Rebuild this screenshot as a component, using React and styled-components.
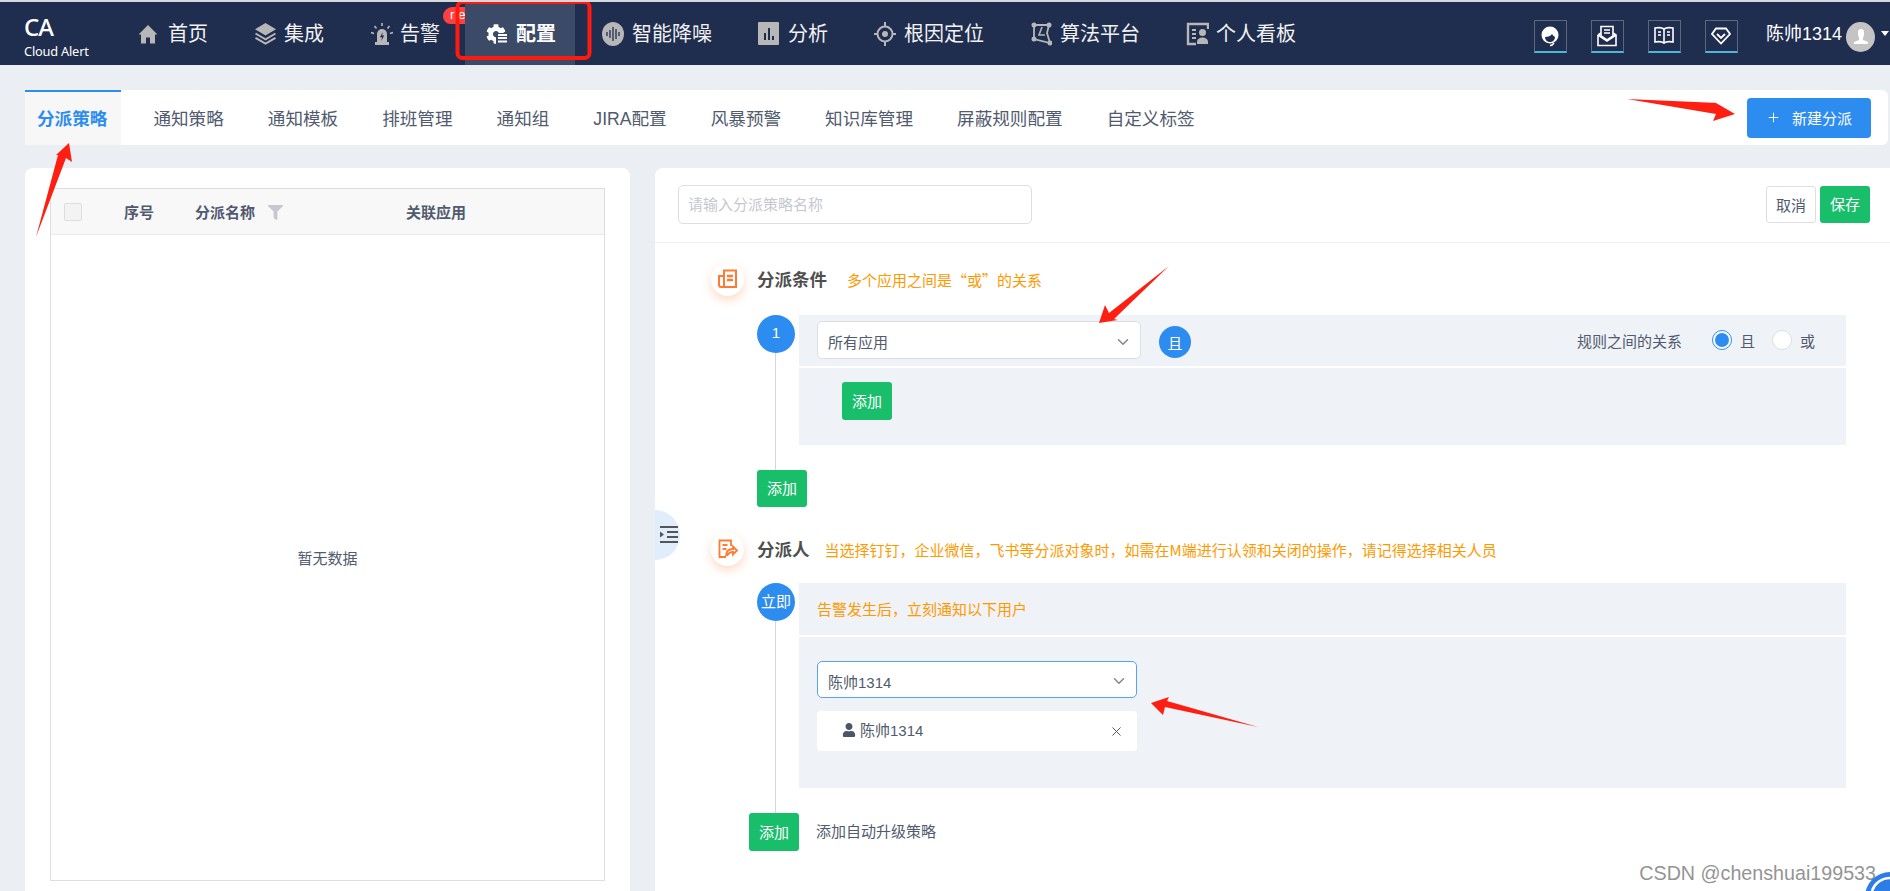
import React from "react";
import styled, { createGlobalStyle } from "styled-components";
import { ChevronDown, Plus, X } from "lucide-react";
import { FaFilter, FaUser, FaCog } from "react-icons/fa";

const GlobalStyle = createGlobalStyle`
  html, body {
    margin: 0;
    padding: 0;
    height: 891px;
    overflow: hidden;
    background: #ebeef3;
    font-family: "Liberation Sans", "Noto Sans CJK SC", sans-serif;
    color: #515a6e;
  }
  * {
    box-sizing: border-box;
  }
`;

const Page = styled.div`
  position: relative;
  width: 1890px;
  height: 891px;
  overflow: hidden;
  border-top: 2px solid #d6d8dc;
`;

/* 顶部导航 */
const Header = styled.header`
  display: flex;
  align-items: stretch;
  height: 63px;
  background: #1f2d4f;
  color: #f2f2f2;
`;

const Logo = styled.div`
  width: 117px;
  padding: 11px 0 0 24px;
  color: #fff;
  font-family: "Noto Sans", sans-serif;
`;

const LogoTitle = styled.div`
  font-size: 24px;
  line-height: 28px;
  font-weight: 500;
  letter-spacing: -1px;
`;

const LogoSub = styled.div`
  margin-top: 2px;
  font-size: 12.8px;
  line-height: 16px;
  letter-spacing: -0.2px;
`;

const Nav = styled.nav`
  display: flex;
`;

const NavItem = styled.a`
  position: relative;
  display: flex;
  align-items: center;
  height: 63px;
  padding: 0 19px 0 21px;
  margin-right: 6px;
  font-size: 20px;
  line-height: 28px;
  white-space: nowrap;
  z-index: ${props => (props.$active ? 1 : 0)};
  background: ${props => (props.$active ? "#3b4a66" : "transparent")};
  color: ${props => (props.$active ? "#fff" : "#f2f2f2")};
  font-weight: ${props => (props.$active ? 700 : 400)};
`;

const NavIcon = styled.span`
  display: flex;
  width: 21px;
  margin-right: 9px;
  justify-content: flex-start;
  svg {
    display: block;
    flex: none;
  }
`;

const Badge = styled.span`
  position: absolute;
  left: 94px;
  top: 5px;
  width: 36px;
  height: 17px;
  padding-left: 7px;
  border-radius: 10px 0 0 8px;
  background: #ff4040;
  color: #fff;
  font-size: 13px;
  line-height: 16px;
  letter-spacing: 4px;
  font-weight: 400;
`;

const HeaderRight = styled.div`
  display: flex;
  align-items: center;
  margin-left: auto;
  padding-right: 1px;
`;

const ToolBox = styled.div`
  display: flex;
  align-items: center;
  justify-content: center;
  width: 33px;
  height: 33px;
  margin: 6px 24px 0 0;
  border: 1px solid #5c667c;
  border-bottom: 2px solid #4fb6d8;
`;

const UserName = styled.span`
  margin: 0 4px;
  font-size: 18px;
  line-height: 24px;
  color: #fff;
`;

const Avatar = styled.div`
  display: flex;
  align-items: center;
  justify-content: center;
  width: 29px;
  height: 30px;
  margin-top: 6px;
  border-radius: 50%;
  background: #c4c4c4;
`;

const Caret = styled.span`
  width: 0;
  height: 0;
  margin: 0 0 0 6px;
  border-left: 4.5px solid transparent;
  border-right: 4.5px solid transparent;
  border-top: 5px solid #fff;
`;

/* 主体 */
const Main = styled.main`
  padding: 25px 0 0 25px;
`;

const TabBar = styled.div`
  display: flex;
  align-items: stretch;
  height: 55px;
  margin: 0 2px 23px 0;
  padding-right: 17px;
  background: #fff;
  border-radius: 0 6px 6px 0;
`;

const Tab = styled.a`
  display: flex;
  align-items: center;
  padding: ${props => (props.$active ? "0 14px 0 12px" : "0 22px")};
  margin-right: ${props => (props.$active ? "10px" : "0")};
  font-size: 17.6px;
  line-height: 24px;
  white-space: nowrap;
  font-weight: ${props => (props.$active ? 700 : 400)};
  color: ${props => (props.$active ? "#2d8cf0" : "#515a6e")};
  background: ${props => (props.$active ? "#f7f7f7" : "transparent")};
  border-top: 2px solid ${props => (props.$active ? "#2d8cf0" : "transparent")};
`;

const PrimaryButton = styled.button`
  display: flex;
  align-items: center;
  align-self: center;
  width: 124px;
  height: 40px;
  margin-left: auto;
  padding: 0 0 0 19px;
  border: 0;
  border-radius: 4px;
  background: #2d8cf0;
  color: #fff;
  font: inherit;
  font-size: 15px;
  svg {
    margin-right: 11px;
  }
`;

const Columns = styled.div`
  display: flex;
  gap: 25px;
  height: 723px;
`;

const LeftPanel = styled.section`
  width: 605px;
  padding: 20px 25px 10px;
  background: #fff;
  border-radius: 8px 8px 0 0;
`;

const Table = styled.div`
  display: flex;
  flex-direction: column;
  height: 100%;
  border: 1px solid #dcdee2;
`;

const TableHead = styled.div`
  display: grid;
  grid-template-columns: 60px 71px 211px 1fr;
  align-items: center;
  height: 46px;
  padding-left: 13px;
  background: #f8f8f9;
  border-bottom: 1px solid #e8eaec;
  font-size: 15px;
  font-weight: 700;
`;

const HeadCheck = styled.span`
  width: 18px;
  height: 18px;
  border: 1px solid #dcdee2;
  border-radius: 2px;
  background: #f3f3f3;
`;

const HeadCell = styled.span`
  display: flex;
  align-items: center;
  gap: 13px;
  svg {
    margin-top: 2px;
  }
`;

const TableEmpty = styled.div`
  flex: 1;
  display: flex;
  align-items: center;
  justify-content: center;
  font-size: 15px;
`;

const RightPanel = styled.section`
  position: relative;
  flex: 1;
  background: #fff;
  border-radius: 8px 0 0 0;
`;

const Toolbar = styled.div`
  display: flex;
  align-items: center;
  height: 75px;
  padding: 0 20px 1px 23px;
  border-bottom: 1px solid #eeeff2;
`;

const NameInput = styled.input`
  width: 354px;
  height: 39px;
  padding: 0 9px;
  border: 1px solid #dcdee2;
  border-radius: 5px;
  font: inherit;
  font-size: 15px;
  &::placeholder {
    color: #c5c8ce;
  }
`;

const Actions = styled.div`
  display: flex;
  gap: 4px;
  margin-left: auto;
`;

const GhostButton = styled.button`
  width: 50px;
  height: 37px;
  padding: 0;
  border: 1px solid #dcdee2;
  border-radius: 3px;
  background: #fff;
  color: #515a6e;
  font: inherit;
  font-size: 15px;
`;

const GreenButton = styled.button`
  flex: none;
  width: 50px;
  height: ${props => props.$h || 37}px;
  margin-left: ${props => props.$left || 0}px;
  padding: 0 0 2px;
  border: 0;
  border-radius: 3px;
  background: #19be6b;
  color: #fff;
  font: inherit;
  font-size: 15px;
`;

const Form = styled.div`
  padding: 20px 44px 0 56px;
`;

const CollapseTab = styled.div`
  position: absolute;
  left: 0;
  top: 342px;
  display: flex;
  align-items: center;
  width: 25px;
  height: 50px;
  padding-left: 5px;
  border-radius: 0 25px 25px 0;
  background: #e1edfb;
`;

const SectionHead = styled.div`
  display: flex;
  align-items: center;
  height: 32px;
  margin-top: ${props => props.$top || 0}px;
`;

const SectionIcon = styled.div`
  display: flex;
  align-items: center;
  justify-content: center;
  width: 33px;
  height: 33px;
  margin-right: 13px;
  border-radius: 50%;
  background: #fff;
  box-shadow: 0 4px 10px rgba(255, 130, 60, 0.3);
`;

const SectionTitle = styled.h3`
  margin: 1px ${props => props.$gap}px 0 0;
  font-size: 17.5px;
  line-height: 24px;
  font-weight: 700;
  color: #4f4f4f;
`;

const Hint = styled.span`
  font-family: "Noto Sans CJK SC", sans-serif;
  font-size: 15px;
  line-height: 22px;
  color: #ff9900;
  white-space: nowrap;
`;

const HeadHint = styled(Hint)`
  margin-top: 2px;
`;

const Step = styled.div`
  display: flex;
  margin: ${props => props.$top}px 0 0 46px;
`;

const Rail = styled.div`
  display: flex;
  flex-direction: column;
  align-items: center;
  width: 38px;
  margin-right: 4px;
`;

const RailDot = styled.div`
  flex: none;
  display: flex;
  align-items: center;
  justify-content: center;
  width: 38px;
  height: 38px;
  padding-bottom: 3px;
  border-radius: 50%;
  background: #2d8cf0;
  color: #fff;
  font-size: 15px;
`;

const RailLine = styled.div`
  flex: 1;
  width: 1px;
  margin-right: 1px;
  background: #d5d7da;
`;

const StepBody = styled.div`
  flex: 1;
  margin-bottom: 25px;
  background: #eff2f7;
`;

const StepRow = styled.div`
  display: flex;
  align-items: center;
  height: ${props => props.$h}px;
  padding: 0 31px 1px 18px;
  border-bottom: 2px solid #fff;
`;

const StepFill = styled.div`
  height: ${props => props.$h}px;
  padding: ${props => props.$pad};
`;

const Select = styled.div`
  display: flex;
  align-items: center;
  justify-content: space-between;
  width: ${props => props.$w}px;
  height: ${props => props.$h}px;
  padding: 3px 8px 0 10px;
  border: 1px solid ${props => (props.$focus ? "#57a3f3" : "#dcdee2")};
  border-radius: 5px;
  background: #fff;
  font-size: 15px;
`;

const AndDot = styled.div`
  display: flex;
  align-items: center;
  justify-content: center;
  width: 32px;
  height: 32px;
  margin: 4px 0 0 18px;
  border-radius: 50%;
  background: #2d8cf0;
  color: #fff;
  font-size: 15px;
`;

const Relation = styled.div`
  display: flex;
  align-items: center;
  margin-left: auto;
  font-size: 15px;
`;

const RelationLabel = styled.span`
  margin-right: 30px;
`;

const Radio = styled.span`
  display: flex;
  align-items: center;
  justify-content: center;
  width: 20px;
  height: 20px;
  margin-right: 8px;
  border: 1px solid ${props => (props.$on ? "#2d8cf0" : "#dcdee2")};
  border-radius: 50%;
  background: #fff;
  &::after {
    content: "";
    display: ${props => (props.$on ? "block" : "none")};
    width: 14px;
    height: 14px;
    border-radius: 50%;
    background: #2d8cf0;
  }
`;

const RadioText = styled.span`
  margin-right: ${props => props.$gap || 0}px;
`;

const UserChip = styled.div`
  display: flex;
  align-items: center;
  width: 320px;
  height: 40px;
  margin-top: 13px;
  padding: 0 13px 3px 25px;
  border-radius: 4px;
  background: #fff;
  font-size: 15px;
`;

const ChipName = styled.span`
  margin-left: 4px;
`;

const ChipClose = styled.span`
  display: flex;
  margin: 4px 0 0 auto;
`;

const AddRow = styled.div`
  display: flex;
  align-items: center;
  margin-left: 38px;
  font-size: 15px;
`;

const AddLabel = styled.span`
  margin: 0 0 4px 17px;
`;

const Watermark = styled.div`
  position: absolute;
  right: 14px;
  bottom: 6px;
  font-size: 19.7px;
  line-height: 24px;
  color: #949494;
`;

const Annotations = styled.svg`
  position: absolute;
  left: 0;
  top: -2px;
  z-index: 2;
  pointer-events: none;
`;

const Gray = "#b7b7b7";

const HomeIcon = () => (
  <svg width="20" height="20" viewBox="0 0 20 20">
    <path d="M10 1 0.5 10.5H3V19.500h5v-6h4v6h5V10.500h2.500z" fill={Gray} />
  </svg>
);

const LayersIcon = () => (
  <svg width="23" height="23" viewBox="0 0 23 23">
    <path d="M11.500 1 22 7.200 11.500 13.400 1 7.200z" fill={Gray} />
    <path d="M1.500 11.500 11.500 17.300 21.500 11.500M1.500 15.800 11.500 21.600 21.500 15.800" fill="none" stroke={Gray} strokeWidth="2" />
  </svg>
);

const AlarmIcon = () => (
  <svg width="24" height="24" viewBox="0 0 24 24">
    <path d="M7 21V12a5 5 0 0 1 10 0v9z" fill={Gray} />
    <rect x="5" y="20" width="14" height="3" fill={Gray} />
    <path d="M12.800 10 10 15.200h2l-.8 3.800 3-5.500h-2z" fill="#1f2d4f" />
    <path d="M12 1v3M4.500 4 6.500 6.500M19.500 4 17.500 6.500M1 10.500 4 11.500M23 10.500 20 11.500" stroke={Gray} strokeWidth="1.600" />
  </svg>
);

const ConfigIcon = () => (
  <svg width="22" height="20" viewBox="0 0 22 20">
    <FaCog size="20" color="#fff" />
    <rect x="10" y="9" width="12" height="11" fill="#3b4a66" />
    <path d="M12 11h9M12 14h9M12 17.500h9" stroke="#fff" strokeWidth="2" />
  </svg>
);

const WaveIcon = () => (
  <svg width="22" height="24" viewBox="0 0 22 24">
    <ellipse cx="11" cy="12" rx="11" ry="12" fill={Gray} />
    <path d="M5 10v4M8 8v8M11 5v14M14 7v10M17 10v4" stroke="#1f2d4f" strokeWidth="1.300" />
  </svg>
);

const ChartIcon = () => (
  <svg width="22" height="24" viewBox="0 0 22 24">
    <rect width="21" height="23" rx="1" fill={Gray} />
    <path d="M7 11v7M11 6v12M15 14v4" stroke="#1f2d4f" strokeWidth="2" />
  </svg>
);

const TargetIcon = () => (
  <svg width="22" height="24" viewBox="0 0 22 24">
    <circle cx="11" cy="12" r="7.500" fill="none" stroke={Gray} strokeWidth="2" />
    <circle cx="11" cy="12" r="3" fill={Gray} />
    <path d="M11 0v5M11 19v5M0 12h4M18 12h4" stroke={Gray} strokeWidth="2" />
  </svg>
);

const AlgoIcon = () => (
  <svg width="22" height="24" viewBox="0 0 22 24">
    <path d="M4 3H19L17 11 20 21 4 17z" fill="none" stroke={Gray} strokeWidth="1.800" />
    <path d="M12 5 9 13h6" fill="none" stroke={Gray} strokeWidth="1.600" />
    <g fill={Gray}>
      <circle cx="4" cy="3" r="2.500" />
      <circle cx="19" cy="3" r="2.500" />
      <circle cx="20" cy="21" r="2.500" />
      <circle cx="4" cy="17" r="2.500" />
    </g>
  </svg>
);

const BoardIcon = () => (
  <svg width="23" height="24" viewBox="0 0 23 24">
    <path d="M22 7V2H2V22H10" fill="none" stroke={Gray} strokeWidth="2.400" />
    <path d="M6 8h4M6 12h4M6 16h4" stroke={Gray} strokeWidth="2" />
    <circle cx="16.500" cy="10.500" r="3.500" fill={Gray} />
    <path d="M11 20c0-6 11-6 11 0v2H11z" fill={Gray} />
  </svg>
);

const HeadsetIcon = () => (
  <svg width="20" height="22" viewBox="0 0 20 22">
    <circle cx="10" cy="10" r="8.500" fill="#fff" />
    <path d="M5 12c3 0 6-1 7-3 1 1.500 2 2.500 3 3 0 3-2.500 5-5 5s-5-2-5-5z" fill="#1f2d4f" />
    <path d="M14 18c-1 1.500-2.500 2.500-4 2.500" fill="none" stroke="#fff" strokeWidth="1.500" />
  </svg>
);

const MailIcon = () => (
  <svg width="20" height="22" viewBox="0 0 20 22" fill="none" stroke="#fff" strokeWidth="1.600">
    <path d="M1 10v10.500h18V10l-3-2M1 10l3-2" />
    <path d="M4 11V1.500h12V11L10 15z" />
    <path d="M7 5h6M7 8h6" />
    <path d="M1 10l9 6 9-6" />
  </svg>
);

const BookIcon = () => (
  <svg width="20" height="20" viewBox="0 0 20 20" fill="none" stroke="#fff" strokeWidth="1.600">
    <path d="M10 3C8 1.500 4 1.500 1 2v14c3-.5 7-.5 9 1 2-1.500 6-1.500 9-1V2c-3-.5-7-.5-9 1z" />
    <path d="M10 3v14M4 6h3M4 9h3M13 6h3M13 9h3" />
  </svg>
);

const DiamondIcon = () => (
  <svg width="20" height="18" viewBox="0 0 20 18" fill="none" stroke="#fff" strokeWidth="1.800">
    <path d="M5 1.500h10L19 7 10 16.500 1 7z" />
    <path d="M6 7l4 4 4-4" />
  </svg>
);

const AvatarIcon = () => (
  <svg width="16" height="18" viewBox="0 0 16 18">
    <path d="M5 4a3 3 0 0 1 6 0v3l-1 3v2l5 2v2H1v-2l5-2v-2L5 7z" fill="#fff" />
  </svg>
);

const CondIcon = () => (
  <svg width="19" height="20" viewBox="0 0 19 20" fill="none" stroke="#ff7a33" strokeWidth="2">
    <path d="M6 7V1.500h12V18H3a2 2 0 0 1-2-2V7h5v11" />
    <path d="M9 7h6M9 11h6" strokeWidth="2.500" />
  </svg>
);

const AssignIcon = () => (
  <svg width="20" height="20" viewBox="0 0 20 20" fill="none" stroke="#ff7a33" strokeWidth="1.800">
    <path d="M13 7V1.500H1.500V18H8" />
    <path d="M4.500 6h5M4.500 10h4" />
    <path d="M8 17c0-5 3-7 7-7V7.500l4 4-4 4V13c-3 0-5 1.500-6 4" />
  </svg>
);

const IndentIcon = () => (
  <svg width="18" height="18" viewBox="0 0 18 18">
    <path d="M0 1h18M7 6h11M7 11h11M0 16h18" stroke="#555" strokeWidth="2" />
    <path d="M0 5.500 4 8.500 0 11.500z" fill="#555" />
  </svg>
);

const navItems = [
  { label: "首页", icon: <HomeIcon /> },
  { label: "集成", icon: <LayersIcon /> },
  { label: "告警", icon: <AlarmIcon />, badge: "re" },
  { label: "配置", icon: <ConfigIcon />, active: true },
  { label: "智能降噪", icon: <WaveIcon /> },
  { label: "分析", icon: <ChartIcon /> },
  { label: "根因定位", icon: <TargetIcon /> },
  { label: "算法平台", icon: <AlgoIcon /> },
  { label: "个人看板", icon: <BoardIcon /> },
];

const tabs = ["分派策略", "通知策略", "通知模板", "排班管理", "通知组", "JIRA配置", "风暴预警", "知识库管理", "屏蔽规则配置", "自定义标签"];

const App = () => {
  return (
    <Page>
      <GlobalStyle />
      <Header>
        <Logo>
          <LogoTitle>CA</LogoTitle>
          <LogoSub>Cloud Alert</LogoSub>
        </Logo>
        <Nav>
          {navItems.map(item => (
            <NavItem key={item.label} $active={item.active}>
              <NavIcon>{item.icon}</NavIcon>
              {item.label}
              {item.badge && <Badge>{item.badge}</Badge>}
            </NavItem>
          ))}
        </Nav>
        <HeaderRight>
          <ToolBox><HeadsetIcon /></ToolBox>
          <ToolBox><MailIcon /></ToolBox>
          <ToolBox><BookIcon /></ToolBox>
          <ToolBox><DiamondIcon /></ToolBox>
          <UserName>陈帅1314</UserName>
          <Avatar><AvatarIcon /></Avatar>
          <Caret />
        </HeaderRight>
      </Header>

      <Main>
        <TabBar>
          {tabs.map((tab, i) => (
            <Tab key={tab} $active={i === 0}>{tab}</Tab>
          ))}
          <PrimaryButton>
            <Plus size={15} strokeWidth={1.5} />
            新建分派
          </PrimaryButton>
        </TabBar>

        <Columns>
          <LeftPanel>
            <Table>
              <TableHead>
                <HeadCheck />
                <HeadCell>序号</HeadCell>
                <HeadCell>
                  分派名称
                  <FaFilter size={15} color="#c5c8ce" />
                </HeadCell>
                <HeadCell>关联应用</HeadCell>
              </TableHead>
              <TableEmpty>暂无数据</TableEmpty>
            </Table>
          </LeftPanel>

          <RightPanel>
            <Toolbar>
              <NameInput placeholder="请输入分派策略名称" />
              <Actions>
                <GhostButton>取消</GhostButton>
                <GreenButton>保存</GreenButton>
              </Actions>
            </Toolbar>

            <CollapseTab><IndentIcon /></CollapseTab>

            <Form>
              <SectionHead>
                <SectionIcon><CondIcon /></SectionIcon>
                <SectionTitle $gap={20}>分派条件</SectionTitle>
                <HeadHint>多个应用之间是“或”的关系</HeadHint>
              </SectionHead>

              <Step $top={20}>
                <Rail>
                  <RailDot>1</RailDot>
                  <RailLine />
                </Rail>
                <StepBody>
                  <StepRow $h={53}>
                    <Select $w={324} $h={38}>
                      所有应用
                      <ChevronDown size={18} color="#808695" />
                    </Select>
                    <AndDot>且</AndDot>
                    <Relation>
                      <RelationLabel>规则之间的关系</RelationLabel>
                      <Radio $on />
                      <RadioText $gap={17}>且</RadioText>
                      <Radio />
                      <RadioText>或</RadioText>
                    </Relation>
                  </StepRow>
                  <StepFill $h={77} $pad="14px 0 0 43px">
                    <GreenButton $h={38}>添加</GreenButton>
                  </StepFill>
                </StepBody>
              </Step>
              <GreenButton $left={46}>添加</GreenButton>

              <SectionHead $top={26}>
                <SectionIcon><AssignIcon /></SectionIcon>
                <SectionTitle $gap={15}>分派人</SectionTitle>
                <HeadHint>当选择钉钉，企业微信，飞书等分派对象时，如需在M端进行认领和关闭的操作，请记得选择相关人员</HeadHint>
              </SectionHead>

              <Step $top={18}>
                <Rail>
                  <RailDot>立即</RailDot>
                  <RailLine />
                </Rail>
                <StepBody>
                  <StepRow $h={54}>
                    <Hint>告警发生后，立刻通知以下用户</Hint>
                  </StepRow>
                  <StepFill $h={151} $pad="24px 0 0 18px">
                    <Select $w={320} $h={37} $focus>
                      陈帅1314
                      <ChevronDown size={18} color="#808695" />
                    </Select>
                    <UserChip>
                      <FaUser size={14} color="#4a5568" />
                      <ChipName>陈帅1314</ChipName>
                      <ChipClose><X size={15} strokeWidth={1.6} /></ChipClose>
                    </UserChip>
                  </StepFill>
                </StepBody>
              </Step>
              <AddRow>
                <GreenButton $h={38}>添加</GreenButton>
                <AddLabel>添加自动升级策略</AddLabel>
              </AddRow>
            </Form>
          </RightPanel>
        </Columns>
      </Main>

      <Watermark>CSDN @chenshuai199533</Watermark>

      {/* 截图上的红色标注 */}
      <Annotations width="1890" height="891" viewBox="0 0 1890 891">
        <rect x="457.500" y="2" width="132" height="56" rx="5" fill="none" stroke="#ff1a0f" strokeWidth="4" />
        <g fill="#ff1f12">
          <path d="M36 237 58 155 56 155 69 143 72 162 66 158z" />
          <path d="M1627 99 1718 103 1716 103 1735 114 1713 121 1716 114z" />
          <path d="M1169 266 1114 319 1117.500 320 1099 323 1105 305 1109 313z" />
          <path d="M1258 727 1165 707 1163 715 1151 703 1169 697 1167 701z" />
        </g>
        <circle cx="1890" cy="897" r="25" fill="#2d7de8" />
        <path d="M1872 891a19 19 0 0 1 18 -13" fill="none" stroke="#fff" strokeWidth="2.500" />
      </Annotations>
    </Page>
  );
};

export default App;
